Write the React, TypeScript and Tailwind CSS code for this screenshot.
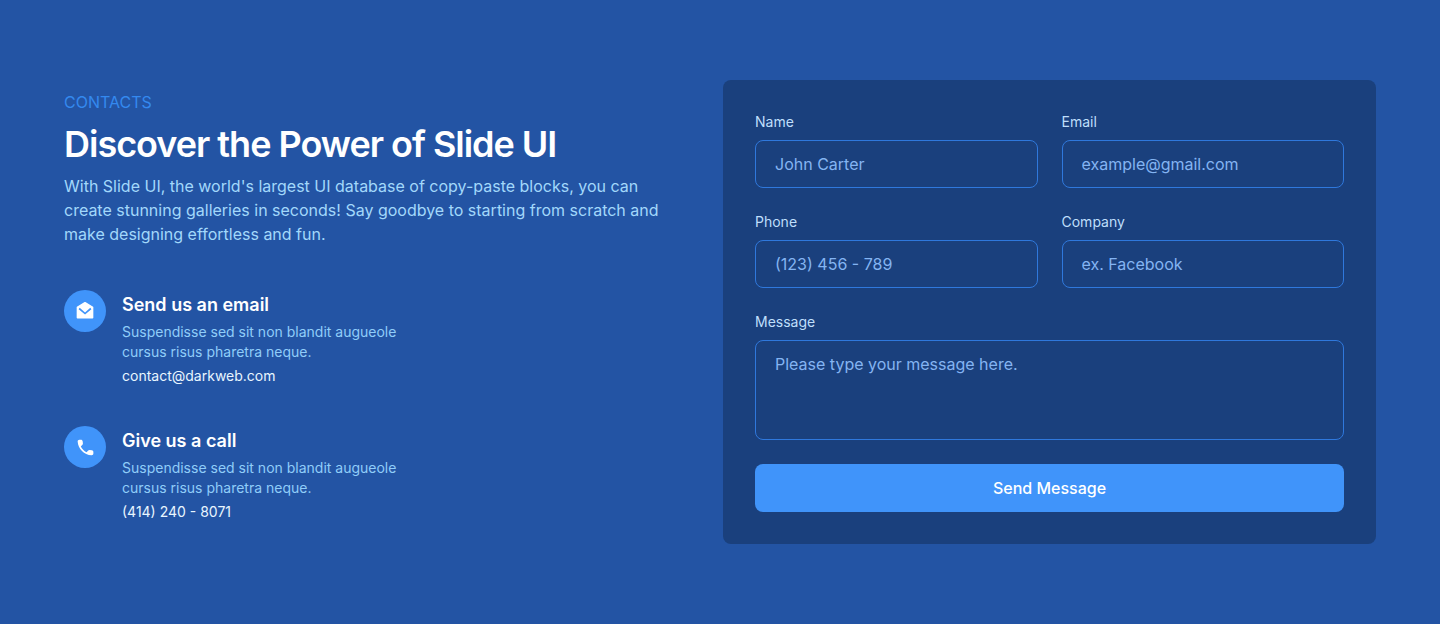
import React from 'react';
import { RiMailOpenFill } from 'react-icons/ri';

interface ContactItemProps {
  icon: React.ReactNode;
  title: string;
  detail: string;
}

interface FieldProps {
  id: string;
  label: string;
  placeholder: string;
  type?: string;
}

const PhoneIcon: React.FC = () => (
  <svg className="h-[21px] w-[21px]" viewBox="0 0 24 24" fill="currentColor">
    <path d="M19.23 15.26l-2.54-.29c-.61-.07-1.21.14-1.64.57l-1.84 1.84c-2.83-1.44-5.15-3.75-6.59-6.59l1.85-1.85c.43-.43.64-1.03.57-1.64l-.29-2.52c-.12-1.01-.97-1.77-1.99-1.77H5.03c-1.13 0-2.07.94-2 2.07.53 8.54 7.36 15.36 15.89 15.89 1.13.07 2.07-.87 2.07-2v-1.73c.01-1.01-.75-1.86-1.76-1.98z" />
  </svg>
);

const ContactItem: React.FC<ContactItemProps> = ({ icon, title, detail }) => (
  <div className="flex items-start gap-4">
    <div className="flex h-[42px] w-[42px] shrink-0 items-center justify-center rounded-full bg-[#4094fa] text-white">
      {icon}
    </div>
    <div>
      <h3 className="pt-px text-lg leading-7 font-semibold text-white">{title}</h3>
      <p className="mt-[3px] w-[290px] text-sm text-[#90cdf9]">
        Suspendisse sed sit non blandit augueole cursus risus pharetra neque.
      </p>
      <p className="mt-1 text-sm text-[#e8f6ff]">{detail}</p>
    </div>
  </div>
);

const Field: React.FC<FieldProps> = ({ id, label, placeholder, type = 'text' }) => (
  <div>
    <label htmlFor={id} className="mb-2 block text-sm text-[#bfdffb]">
      {label}
    </label>
    <input
      id={id}
      type={type}
      placeholder={placeholder}
      className="block h-12 w-full rounded-lg border border-[#2f78dc] px-[19px] text-base text-white placeholder:text-[#84b4f2]"
    />
  </div>
);

const App: React.FC = () => {
  return (
    <section className="h-[624px] bg-[#2354a4] px-16 py-20 font-['Inter',sans-serif]">
      <div className="flex items-start justify-between">
        {/* Intro and contact details */}
        <div className="w-[600px] pt-2.5">
          <p className="text-base text-[#3489ef]">CONTACTS</p>
          <h1 className="mt-2.5 text-4xl leading-10 font-semibold tracking-[-1.02px] text-white">
            Discover the Power of Slide UI
          </h1>
          <p className="mt-2.5 text-base text-[#a2d8fb]">
            With Slide UI, the world's largest UI database of copy-paste blocks, you can
            create stunning galleries in seconds! Say goodbye to starting from scratch and
            make designing effortless and fun.
          </p>
          <div className="mt-11 flex flex-col gap-10">
            <ContactItem
              icon={<RiMailOpenFill className="h-5 w-5" />}
              title="Send us an email"
              detail="contact@darkweb.com"
            />
            <ContactItem
              icon={<PhoneIcon />}
              title="Give us a call"
              detail="(414) 240 - 8071"
            />
          </div>
        </div>

        {/* Contact form */}
        <form className="w-[653px] rounded-lg bg-[#1a407d] p-8">
          <div className="grid grid-cols-2 gap-6">
            <Field id="name" label="Name" placeholder="John Carter" />
            <Field id="email" label="Email" placeholder="example@gmail.com" type="email" />
            <Field id="phone" label="Phone" placeholder="(123) 456 - 789" type="tel" />
            <Field id="company" label="Company" placeholder="ex. Facebook" />
            <div className="col-span-2">
              <label htmlFor="message" className="mb-2 block text-sm text-[#bfdffb]">
                Message
              </label>
              <textarea
                id="message"
                placeholder="Please type your message here."
                className="block h-[100px] w-full resize-none rounded-lg border border-[#2f78dc] px-[19px] py-[11px] text-base text-white placeholder:text-[#84b4f2]"
              />
            </div>
          </div>
          <button
            type="button"
            className="mt-6 h-12 w-full rounded-lg bg-[#4094fa] text-base font-medium text-white"
          >
            Send Message
          </button>
        </form>
      </div>
    </section>
  );
};

export default App;
